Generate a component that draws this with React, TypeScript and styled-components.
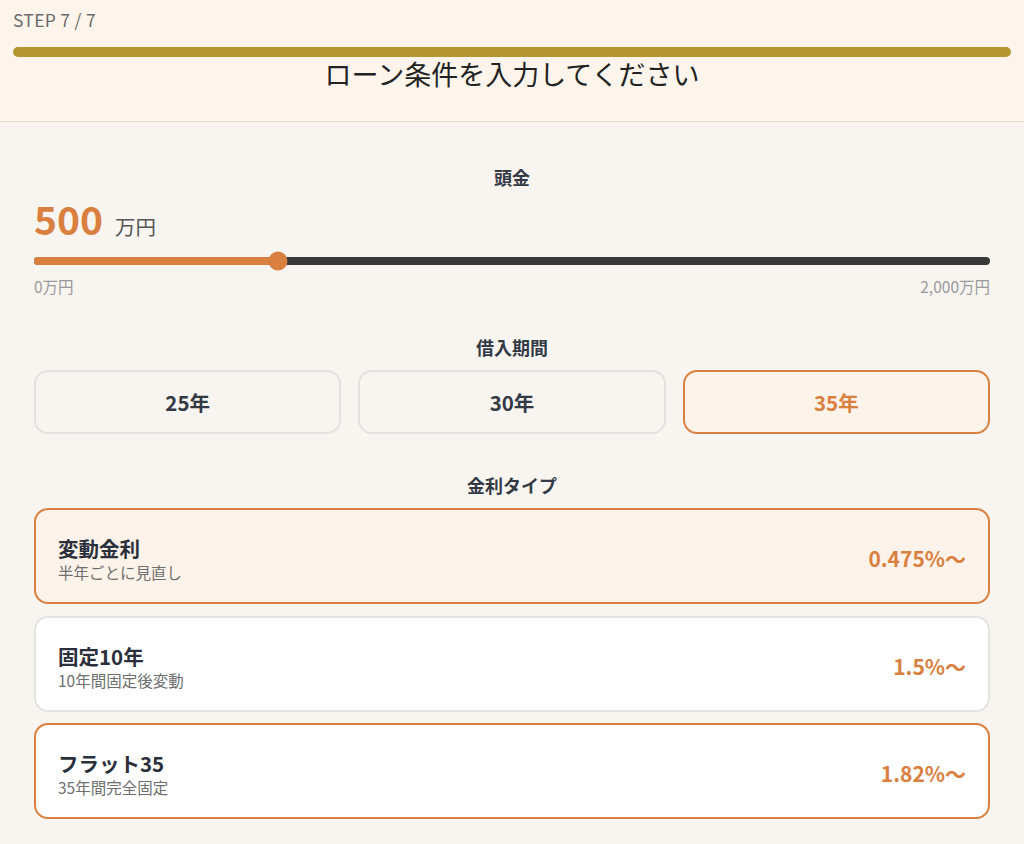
import React, { useState } from 'react'
import styled, { createGlobalStyle } from 'styled-components'

const ORANGE = '#d98041'
const FONT = `"Noto Sans CJK JP", "Noto Sans", sans-serif`
const THUMB = 19

const GlobalStyle = createGlobalStyle`
  html, body {
    margin: 0;
    padding: 0;
    background: #f8f5f0;
    font-family: ${FONT};
    color: #2d3440;
  }
  * { box-sizing: border-box; }
`

const Header = styled.header`
  background: #fdf5ec;
  border-bottom: 1px solid #eadfd3;
  padding: 8px 13px 0;
  height: 122px;
`

const StepLabel = styled.div`
  font-size: 17.5px;
  color: #6b6b6b;
  line-height: 24px;
  letter-spacing: 0.3px;
`

const Progress = styled.div`
  margin-top: 15px;
  height: 10px;
  border-radius: 5px;
  background: #b5962f;
`

const Title = styled.h1`
  margin: 0;
  text-align: center;
  font-size: 27px;
  font-weight: 400;
  color: #222;
  line-height: 34px;
`

const Main = styled.main`
  padding: 42px 34px 24px;
`

const SectionLabel = styled.div`
  text-align: center;
  font-size: 18px;
  font-weight: 700;
  color: #333a45;
  line-height: 26px;
`

const AmountRow = styled.div`
  display: flex;
  align-items: baseline;
  gap: 12px;
  margin-top: 5px;
`

const Amount = styled.span`
  font-size: 39px;
  font-weight: 700;
  color: ${ORANGE};
  line-height: 46px;
`

const Unit = styled.span`
  font-size: 20.5px;
  color: #555;
`

const Track = styled.div`
  position: relative;
  height: 8px;
  margin-top: 16px;
  border-radius: 4px;
  background: #3a3a3a;
`

const Fill = styled.div`
  height: 100%;
  border-radius: 4px;
  background: ${ORANGE};
`

const Thumb = styled.div`
  position: absolute;
  top: 50%;
  width: ${THUMB}px;
  height: ${THUMB}px;
  border-radius: 50%;
  background: ${ORANGE};
  transform: translate(-50%, -50%);
`

const RangeLabels = styled.div`
  display: flex;
  justify-content: space-between;
  margin-top: 10px;
  font-size: 15.5px;
  color: #9a9a9a;
  line-height: 22px;
`

const Section = styled.section<{ gap: number }>`
  margin-top: ${(p) => p.gap}px;
  display: flex;
  flex-direction: column;
`

const TermGrid = styled.div`
  display: grid;
  grid-template-columns: repeat(3, 1fr);
  gap: 17px;
  margin-top: 10px;
`

const TermButton = styled.button<{ active: boolean }>`
  height: 64px;
  border-radius: 14px;
  border: 2px solid ${(p) => (p.active ? ORANGE : '#e4e2df')};
  background: ${(p) => (p.active ? '#fdf3ea' : '#f8f5f0')};
  color: ${(p) => (p.active ? ORANGE : '#333a45')};
  font-family: ${FONT};
  font-size: 20.5px;
  font-weight: 700;
  cursor: pointer;
`

const RateList = styled.div`
  display: flex;
  flex-direction: column;
  gap: 11.5px;
  margin-top: 10px;
`

const RateCard = styled.button<{ active: boolean; outlined: boolean }>`
  display: flex;
  align-items: center;
  justify-content: space-between;
  height: 96px;
  padding: 0 22px;
  border-radius: 14px;
  border: 2px solid ${(p) => (p.outlined ? ORANGE : '#e6e4e1')};
  background: ${(p) => (p.active ? '#fdf3ea' : '#ffffff')};
  font-family: ${FONT};
  text-align: left;
  cursor: pointer;
`

const RateText = styled.div`
  display: flex;
  flex-direction: column;
  padding-top: 4px;
`

const RateName = styled.div`
  font-size: 20.5px;
  font-weight: 700;
  color: #2a303b;
  line-height: 28px;
`

const RateNote = styled.div`
  font-size: 15.5px;
  color: #6e6e6e;
  line-height: 20px;
`

const RateValue = styled.div`
  font-size: 21px;
  font-weight: 700;
  color: ${ORANGE};
  padding-top: 4px;
`

const terms = ['25年', '30年', '35年']
const rates = [
  { name: '変動金利', note: '半年ごとに見直し', value: '0.475%〜' },
  { name: '固定10年', note: '10年間固定後変動', value: '1.5%〜' },
  { name: 'フラット35', note: '35年間完全固定', value: '1.82%〜' },
]

export default function App() {
  const [term, setTerm] = useState('35年')
  const [rate, setRate] = useState(0)
  const down = 500
  const ratio = down / 2000
  const pos = `calc(${ratio} * (100% - ${THUMB}px) + ${THUMB / 2}px)`

  return (
    <>
      <GlobalStyle />
      <Header>
        <StepLabel>STEP 7 / 7</StepLabel>
        <Progress />
        <Title>ローン条件を入力してください</Title>
      </Header>
      <Main>
        <SectionLabel>頭金</SectionLabel>
        <AmountRow>
          <Amount>{down}</Amount>
          <Unit>万円</Unit>
        </AmountRow>
        <Track>
          <Fill style={{ width: pos }} />
          <Thumb style={{ left: pos }} />
        </Track>
        <RangeLabels>
          <span>0万円</span>
          <span>2,000万円</span>
        </RangeLabels>

        <Section gap={37}>
          <SectionLabel>借入期間</SectionLabel>
          <TermGrid>
            {terms.map((t) => (
              <TermButton key={t} active={t === term} onClick={() => setTerm(t)}>
                {t}
              </TermButton>
            ))}
          </TermGrid>
        </Section>

        <Section gap={38}>
          <SectionLabel>金利タイプ</SectionLabel>
          <RateList>
            {rates.map((r, i) => (
              <RateCard
                key={r.name}
                active={i === rate}
                outlined={i === rate || i === 2}
                onClick={() => setRate(i)}
              >
                <RateText>
                  <RateName>{r.name}</RateName>
                  <RateNote>{r.note}</RateNote>
                </RateText>
                <RateValue>{r.value}</RateValue>
              </RateCard>
            ))}
          </RateList>
        </Section>
      </Main>
    </>
  )
}
